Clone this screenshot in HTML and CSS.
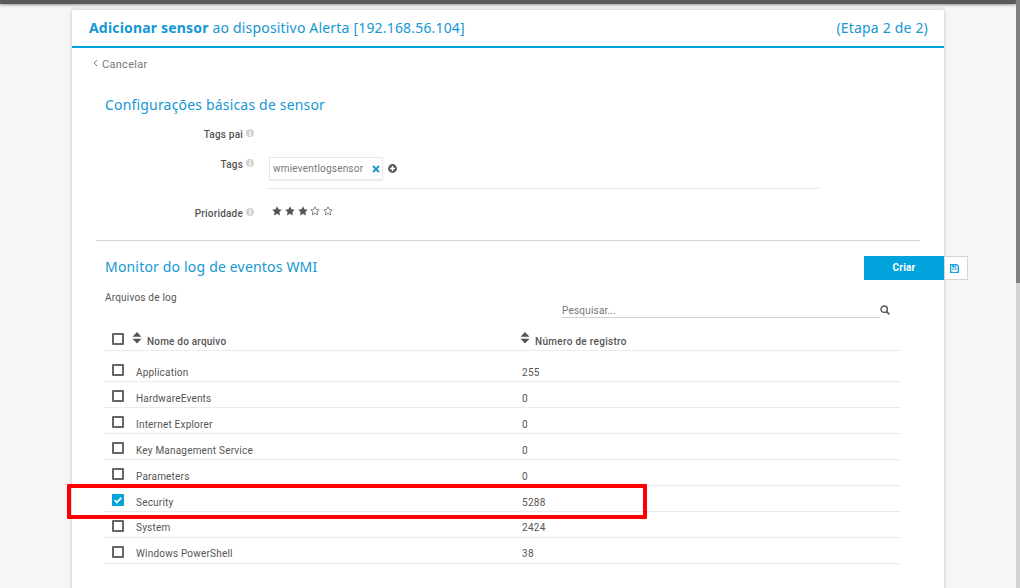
FILE: index.html
```html
<!DOCTYPE html>
<html lang="pt">
<head>
    <meta charset="UTF-8">
    <meta name="viewport" content="width=device-width, initial-scale=1.0">
    <title>Adicionar sensor</title>
    <link rel="stylesheet" href="styles.css">
</head>
<body>
    <svg class="symbols" width="0" height="0">
        <symbol id="info" viewBox="0 0 8 8">
            <circle cx="4" cy="4" r="4" fill="#d2d2d2"/>
            <path d="M3.4 1.3h1.3v1.1H3.4zM3 3.2h1.7v2.5h.5v.8H2.9v-.8h.5V4H3z" fill="#fff"/>
        </symbol>
        <symbol id="star" viewBox="0 0 10 10">
            <path d="M5 .2l1.5 3 3.3.5-2.4 2.3.6 3.4L5 7.8 2 9.4 2.6 6 .2 3.7l3.3-.5z" fill="#555"/>
        </symbol>
        <symbol id="star-empty" viewBox="0 0 10 10">
            <path d="M5 .8l1.3 2.7 2.9.4-2.1 2 .5 2.9L5 7.4 2.4 8.8l.5-2.9-2.1-2 2.9-.4z" fill="none" stroke="#666" stroke-width=".8"/>
        </symbol>
        <symbol id="sort" viewBox="0 0 10 12">
            <path d="M5 0l4.5 4.8H.5zM.5 6.8h9L5 11.6z" fill="#555"/>
        </symbol>
    </svg>

    <div class="topbar"></div>
    <div class="scrollbar"><div class="thumb"></div></div>

    <div class="panel">
        <div class="panel_head">
            <div><b>Adicionar sensor</b> ao dispositivo Alerta [192.168.56.104]</div>
            <div class="step">(Etapa 2 de 2)</div>
        </div>
        <a class="cancel">
            <svg width="5" height="8" viewBox="0 0 5 8"><path d="M4 1L1.2 4 4 7" fill="none" stroke="#777"/></svg>
            <span>Cancelar</span>
        </a>

        <form class="basic">
            <h2>Configurações básicas de sensor</h2>
            <div class="row">
                <label><span>Tags pai</span><svg class="info"><use href="#info"/></svg></label>
            </div>
            <div class="row row_tags">
                <label><span>Tags</span><svg class="info"><use href="#info"/></svg></label>
                <div class="tags">
                    <div class="tag">
                        <span>wmieventlogsensor</span>
                        <svg width="8" height="8" viewBox="0 0 8 8"><path d="M1 1l6 6M7 1L1 7" stroke="#1a93cf" stroke-width="1.8"/></svg>
                    </div>
                    <svg width="9" height="9" viewBox="0 0 9 9"><circle cx="4.5" cy="4.5" r="4.4" fill="#555"/><path d="M4.5 2v5M2 4.5h5" stroke="#fff" stroke-width="1.6"/></svg>
                </div>
            </div>
            <div class="row row_priority">
                <label><span>Prioridade</span><svg class="info"><use href="#info"/></svg></label>
                <div class="stars">
                    <svg><use href="#star"/></svg>
                    <svg><use href="#star"/></svg>
                    <svg><use href="#star"/></svg>
                    <svg><use href="#star-empty"/></svg>
                    <svg><use href="#star-empty"/></svg>
                </div>
            </div>
        </form>

        <div class="monitor">
            <div class="monitor_head">
                <h2>Monitor do log de eventos WMI</h2>
                <div class="actions">
                    <div class="create">Criar</div>
                    <div class="save">
                        <svg width="9" height="9" viewBox="0 0 9 9"><path d="M.6.6h6.2l1.6 1.6v6.2H.6z" fill="#d8f0fa" stroke="#14a3db" stroke-width="1.2"/><path d="M2.2.6h3.9v2.8H2.2z" fill="#14a3db"/><path d="M4.3 1h1v1.6h-1zM2.4 5.7h4.2v2H2.4z" fill="#fff"/><path d="M2 5.2h5" stroke="#14a3db" stroke-width=".8"/></svg>
                    </div>
                </div>
            </div>
            <div class="caption">Arquivos de log</div>
            <div class="search">
                <div class="field">Pesquisar...</div>
                <svg width="10" height="10" viewBox="0 0 10 10"><circle cx="4.2" cy="4.2" r="3.2" fill="none" stroke="#555" stroke-width="1.4"/><path d="M6.5 6.5l2.8 2.8" stroke="#555" stroke-width="1.7"/></svg>
            </div>

            <div class="table">
                <div class="line line_head">
                    <i class="check"></i>
                    <div class="name"><svg class="sort"><use href="#sort"/></svg><span>Nome do arquivo</span></div>
                    <div class="count"><svg class="sort"><use href="#sort"/></svg><span>Número de registro</span></div>
                </div>
                <div class="line line_first"><i class="check"></i><div class="name">Application</div><div class="count">255</div></div>
                <div class="line"><i class="check"></i><div class="name">HardwareEvents</div><div class="count">0</div></div>
                <div class="line"><i class="check"></i><div class="name">Internet Explorer</div><div class="count">0</div></div>
                <div class="line"><i class="check"></i><div class="name">Key Management Service</div><div class="count">0</div></div>
                <div class="line"><i class="check"></i><div class="name">Parameters</div><div class="count">0</div></div>
                <div class="line">
                    <i class="check checked"><svg width="12" height="12" viewBox="0 0 12 12"><path d="M2.6 6l2.3 2.4 4.4-4.6" fill="none" stroke="#fff" stroke-width="1.8"/></svg></i>
                    <div class="name">Security</div><div class="count">5288</div>
                </div>
                <div class="line line_up"><i class="check"></i><div class="name">System</div><div class="count">2424</div></div>
                <div class="line line_up"><i class="check"></i><div class="name">Windows PowerShell</div><div class="count">38</div></div>
            </div>
        </div>
        <div class="highlight"></div>
    </div>
</body>
</html>
```

FILE: styles.css
```css
*, *:after, *:before {
    box-sizing: border-box;
}

body {
    font-family: Roboto, Arial, sans-serif;
    font-size: 10px;
    letter-spacing: 0.2px;
    line-height: 14px;
    margin: 0;
    height: 588px;
    overflow: hidden;
    background: #f6f6f6;
    color: #555;
    white-space: nowrap;
}

svg {
    display: block;
    flex: none;
}

.symbols {
    position: absolute;
}

.topbar {
    height: 4px;
    margin-right: 4px;
    background: #595955;
    box-shadow: 0 1px 3px rgba(0,0,0,0.4);
}

.scrollbar {
    position: absolute;
    top: 0;
    right: 0;
    width: 4px;
    height: 588px;
    background: #d2d2d2;
}

.thumb {
    height: 283px;
    background: #7f7f7f;
}

.panel {
    position: relative;
    width: 872px;
    height: 600px;
    margin: 6px 0 0 72px;
    background: white;
    box-shadow: 0 0 4px rgba(0,0,0,0.22);
}

.panel_head {
    display: flex;
    justify-content: space-between;
    height: 38px;
    padding: 0 16px 0 17px;
    border-bottom: 2px solid #00a3db;
    font-family: "Noto Sans", sans-serif;
    font-size: 14px;
    line-height: 36px;
    letter-spacing: 0.18px;
    color: #1597d3;
}

.cancel {
    display: flex;
    align-items: center;
    gap: 4px;
    height: 32px;
    padding-left: 21px;
    font-size: 11px;
    letter-spacing: 0.3px;
    color: #777;
}

.cancel span {
    padding-top: 2px;
}

.cancel svg {
    margin-bottom: 2px;
}

h2 {
    margin: 0;
    font-family: "Noto Sans", sans-serif;
    font-size: 14px;
    font-weight: 400;
    line-height: 20px;
    letter-spacing: 0.18px;
    color: #1597d3;
}

.basic {
    height: 161px;
    margin: 0 24px;
    padding: 15px 0 0 9px;
    border-bottom: 1px solid #d2d2d2;
}

.row {
    display: grid;
    grid-template-columns: 149px 554px;
    column-gap: 12px;
    height: 30px;
    padding-top: 13px;
}

.row label {
    display: flex;
    justify-content: flex-end;
    gap: 3px;
    height: 14px;
    font-weight: 500;
}

.info {
    width: 8px;
    height: 8px;
    margin-top: 1px;
}

.row_tags {
    height: 44px;
}

.tags {
    display: flex;
    align-items: center;
    gap: 5px;
    height: 40px;
    margin-top: -9px;
    padding: 0 0 0 3px;
    border-bottom: 1px solid #ebebeb;
}

.tag {
    display: flex;
    align-items: center;
    justify-content: space-between;
    width: 114px;
    height: 23px;
    padding: 0 2px 0 3px;
    border: 1px solid #e8e8e8;
    box-shadow: 0 1px 1px rgba(0,0,0,0.06);
    color: #777;
}

.row_priority {
    padding-top: 18px;
}

.stars {
    display: flex;
    gap: 2.8px;
    margin-top: -1px;
    padding-left: 6px;
}

.stars svg {
    width: 10px;
    height: 10px;
}

.monitor {
    padding: 15px 0 0 33px;
}

.monitor_head {
    display: flex;
    justify-content: space-between;
    height: 35px;
    margin-right: -24px;
}

.monitor_head h2 {
    padding-top: 1px;
}

.actions {
    display: flex;
    height: 24px;
}

.create {
    width: 80px;
    background: #00a3db;
    color: white;
    font-weight: 700;
    line-height: 24px;
    text-align: center;
}

.save {
    display: flex;
    align-items: center;
    width: 24px;
    padding-left: 5px;
    background: white;
    border: 1px solid #d6d6d6;
}

.search {
    display: flex;
    height: 13px;
    margin-left: 457px;
}

.search svg {
    margin-top: 0;
}

.field {
    width: 318px;
    height: 13px;
    border-bottom: 1px solid #d2d2d2;
    line-height: 12px;
    color: #777;
}

.table {
    width: 796px;
    margin-left: -1px;
}

.line {
    display: grid;
    grid-template-columns: 32px 386px 1fr;
    height: 26px;
    padding-top: 10px;
    border-bottom: 1px solid #ebebeb;
}

.line_head {
    height: 33px;
    padding-top: 17px;
    font-weight: 500;
}

.line_first {
    height: 31px;
    padding-top: 15px;
}

.line_up {
    padding-top: 9px;
}

.line_head .name,
.line_head .count {
    display: flex;
    gap: 5px;
    margin-left: -4px;
}

.line_head .count {
    margin-left: -2px;
}

.count {
    letter-spacing: 0.3px;
}

.sort {
    width: 10px;
    height: 12px;
    margin-top: -3px;
}

.check {
    width: 12px;
    height: 12px;
    margin: -2px 0 0 8px;
    border: 2px solid #666;
    border-radius: 1px;
}

.line_up .check {
    margin-top: -1px;
}

.checked {
    border: 0;
    background: #00a3db;
}

.highlight {
    position: absolute;
    top: 474px;
    left: -5px;
    width: 580px;
    height: 35px;
    border: 4px solid #f00;
    border-radius: 1px;
}
```
